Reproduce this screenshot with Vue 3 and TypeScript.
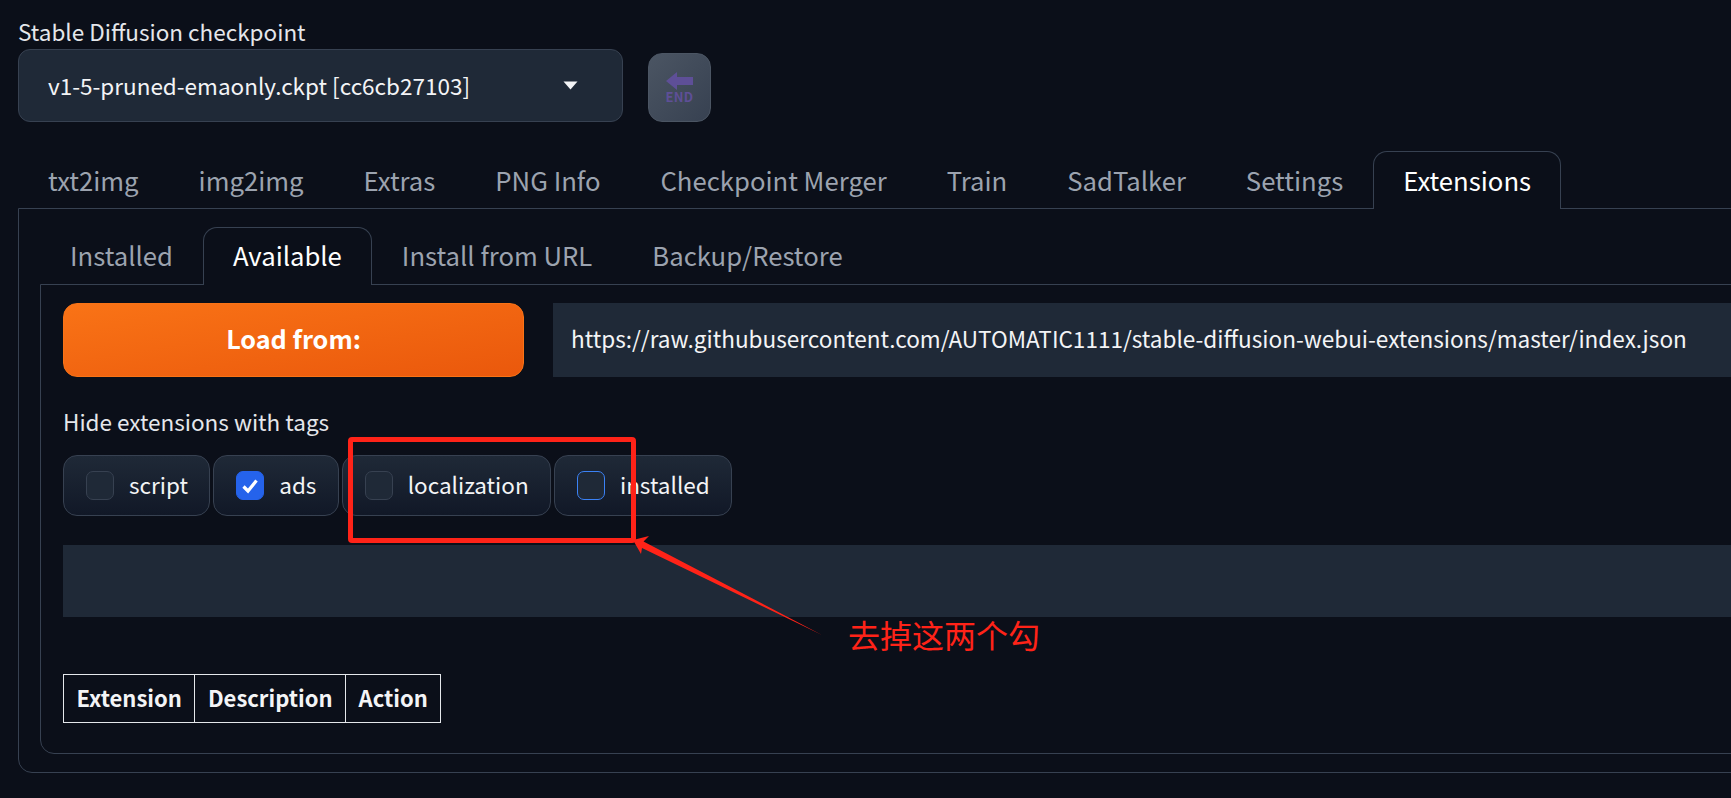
<script setup lang="ts">
const mainTabs: string[] = ['txt2img', 'img2img', 'Extras', 'PNG Info', 'Checkpoint Merger', 'Train', 'SadTalker', 'Settings']
const subTabs: string[] = ['Installed']
const subTabsAfter: string[] = ['Install from URL', 'Backup/Restore']
const tags = [
  { name: 'script', state: '' },
  { name: 'ads', state: 'checked' },
  { name: 'localization', state: '' },
  { name: 'installed', state: 'focus' },
]
</script>

<template>
  <div class="page">
    <div class="main">
      <div class="model-label">Stable Diffusion checkpoint</div>
      <div class="model-row">
        <div class="select">
          <span>v1-5-pruned-emaonly.ckpt [cc6cb27103]</span>
          <svg class="caret" width="15" height="9" viewBox="0 0 15 9"><path d="M0.5 0.5h14L7.5 8.5z" fill="#f3f4f6" /></svg>
        </div>
        <button class="end-btn">
          <svg class="end-arrow" width="27" height="18" viewBox="0 0 27 18"><path d="M0 9 11 0v5h16v8H11v5z" fill="#5e4f97" /></svg>
          <span class="end-text">END</span>
        </button>
      </div>

      <div class="tabs">
        <div v-for="t in mainTabs" :key="t" class="tab">{{ t }}</div>
        <div class="tab active">Extensions</div>
      </div>

      <section class="panel">
        <div class="tabs sub">
          <div v-for="t in subTabs" :key="t" class="tab">{{ t }}</div>
          <div class="tab active">Available</div>
          <div v-for="t in subTabsAfter" :key="t" class="tab">{{ t }}</div>
        </div>
        <div class="panel inner">
          <div class="load-row">
            <button class="load-btn">Load from:</button>
            <div class="url">https://raw.githubusercontent.com/AUTOMATIC1111/stable-diffusion-webui-extensions/master/index.json</div>
          </div>
          <div class="hide-label">Hide extensions with tags</div>
          <div class="chips">
            <label v-for="tag in tags" :key="tag.name" class="chip">
              <span class="box" :class="tag.state">
                <svg v-if="tag.state === 'checked'" width="18" height="16" viewBox="0 0 18 16"><path d="M2.5 8.5 7 13 15.5 2.5" fill="none" stroke="#fff" stroke-width="3.2" /></svg>
              </span>
              <span class="chip-text">{{ tag.name }}</span>
            </label>
          </div>
          <div class="search"></div>
          <table class="ext-table">
            <thead>
              <tr><th>Extension</th><th>Description</th><th>Action</th></tr>
            </thead>
          </table>
        </div>
      </section>
    </div>

    <div class="red-box"></div>
    <svg class="red-arrow" width="200" height="110" viewBox="0 0 200 110">
      <path d="M3 10 19 6 13.5 11.5 192 105 12 18 11 24z" fill="#ff2318" />
    </svg>
    <div class="note">去掉这两个勾</div>
  </div>
</template>

<style>
html, body { margin: 0; background: #0b0f19; }
</style>

<style scoped>
.page {
  position: relative;
  width: 1731px;
  height: 798px;
  overflow: hidden;
  background: #0b0f19;
  color: #f3f4f6;
  font-family: "Noto Sans CJK SC", "Noto Sans", sans-serif;
  font-size: 22.5px;
}
.main {
  width: 1950px;
  padding: 16px 0 0 18px;
  box-sizing: border-box;
}
.model-label {
  height: 33px;
  line-height: 30px;
  color: #e5e7eb;
}
.model-row {
  display: flex;
  align-items: flex-end;
  gap: 25px;
}
.select {
  box-sizing: border-box;
  width: 605px;
  height: 73px;
  border: 1px solid #374151;
  border-radius: 12px;
  background: #1f2937;
  padding: 0 29px 1px 29px;
  display: flex;
  align-items: center;
  justify-content: space-between;
}
.caret { margin: 1px 15px 0 0; }
.end-btn {
  box-sizing: border-box;
  width: 63px;
  height: 69px;
  border: 1px solid #4b5563;
  border-radius: 14px;
  background: linear-gradient(to bottom right, #4b5563, #374151);
  padding: 18px 0 0;
  display: flex;
  flex-direction: column;
  align-items: center;
  font-family: "Noto Sans CJK SC", sans-serif;
}
.end-arrow { display: block; }
.end-text {
  color: #5e4f97;
  font-size: 13px;
  line-height: 13px;
  font-weight: 700;
  letter-spacing: .3px;
}
.tabs {
  display: flex;
  margin-top: 29px;
  height: 57px;
  color: #9ca3af;
  font-size: 25.7px;
  position: relative;
  z-index: 1;
}
.tab {
  box-sizing: border-box;
  height: 57px;
  line-height: 55px;
  padding: 0 29px;
  border: 1px solid transparent;
  border-bottom: 0;
  border-radius: 14px 14px 0 0;
  white-space: nowrap;
}
.tab.active {
  color: #fff;
  background: #0b0f19;
  border-color: #374151;
  height: 58px;
}
.panel {
  box-sizing: border-box;
  border: 1px solid #374151;
  border-radius: 0 0 0 14px;
  padding: 0 0 18px 21px;
  height: 565px;
}
.tabs.sub {
  margin-top: 18px;
  height: 57px;
}
.tabs.sub .tab { height: 57px; line-height: 54px; }
.tabs.sub .tab.active { height: 58px; }
.panel.inner {
  padding: 18px 0 0 22px;
  height: 470px;
}
.load-row {
  display: flex;
  gap: 29px;
  height: 74px;
}
.load-btn {
  box-sizing: border-box;
  width: 461px;
  height: 74px;
  border: 1px solid #f97316;
  border-radius: 14px;
  background: linear-gradient(to bottom right, #f97316, #ea580c);
  color: #fff;
  font-family: inherit;
  font-size: 25.2px;
  font-weight: 700;
  padding: 0 0 4px;
}
.url {
  flex: 1;
  background: #1f2937;
  padding: 0 18px;
  line-height: 71px;
  height: 74px;
  font-size: 22.55px;
  white-space: nowrap;
}
.hide-label {
  margin-top: 30px;
  line-height: 28px;
  color: #e5e7eb;
}
.chips {
  display: flex;
  gap: 3px;
  margin-top: 20px;
}
.chip {
  box-sizing: border-box;
  height: 61px;
  display: flex;
  align-items: center;
  gap: 15px;
  padding: 0 21.3px 0 22px;
  border: 1px solid #374151;
  border-radius: 14px;
  background: linear-gradient(to bottom, #1f2937, #111827);
}
.chip-text { position: relative; top: -2px; }
.box {
  box-sizing: border-box;
  width: 28px;
  height: 29px;
  border: 1px solid #374151;
  border-radius: 7px;
  background: #1f2937;
  display: flex;
  align-items: center;
  justify-content: center;
}
.box.checked { background: #2563eb; border-color: #2563eb; }
.box.focus { border-color: #3b82f6; }
.search {
  margin-top: 29px;
  height: 72px;
  background: #1f2937;
}
.ext-table {
  margin-top: 57px;
  border-collapse: collapse;
  font-size: 22px;
}
.ext-table th {
  border: 1px solid #e5e7eb;
  height: 43px;
  padding: 0 12.5px 4px;
  font-weight: 700;
}
.red-box {
  position: absolute;
  left: 348px;
  top: 437px;
  width: 288px;
  height: 106px;
  box-sizing: border-box;
  border: 5px solid #ff2318;
  border-radius: 4px;
}
.red-arrow {
  position: absolute;
  left: 630px;
  top: 530px;
}
.note {
  position: absolute;
  left: 848px;
  top: 611px;
  color: #ff2318;
  font-size: 32px;
  font-weight: 400;
  line-height: 46px;
  white-space: nowrap;
}
</style>
